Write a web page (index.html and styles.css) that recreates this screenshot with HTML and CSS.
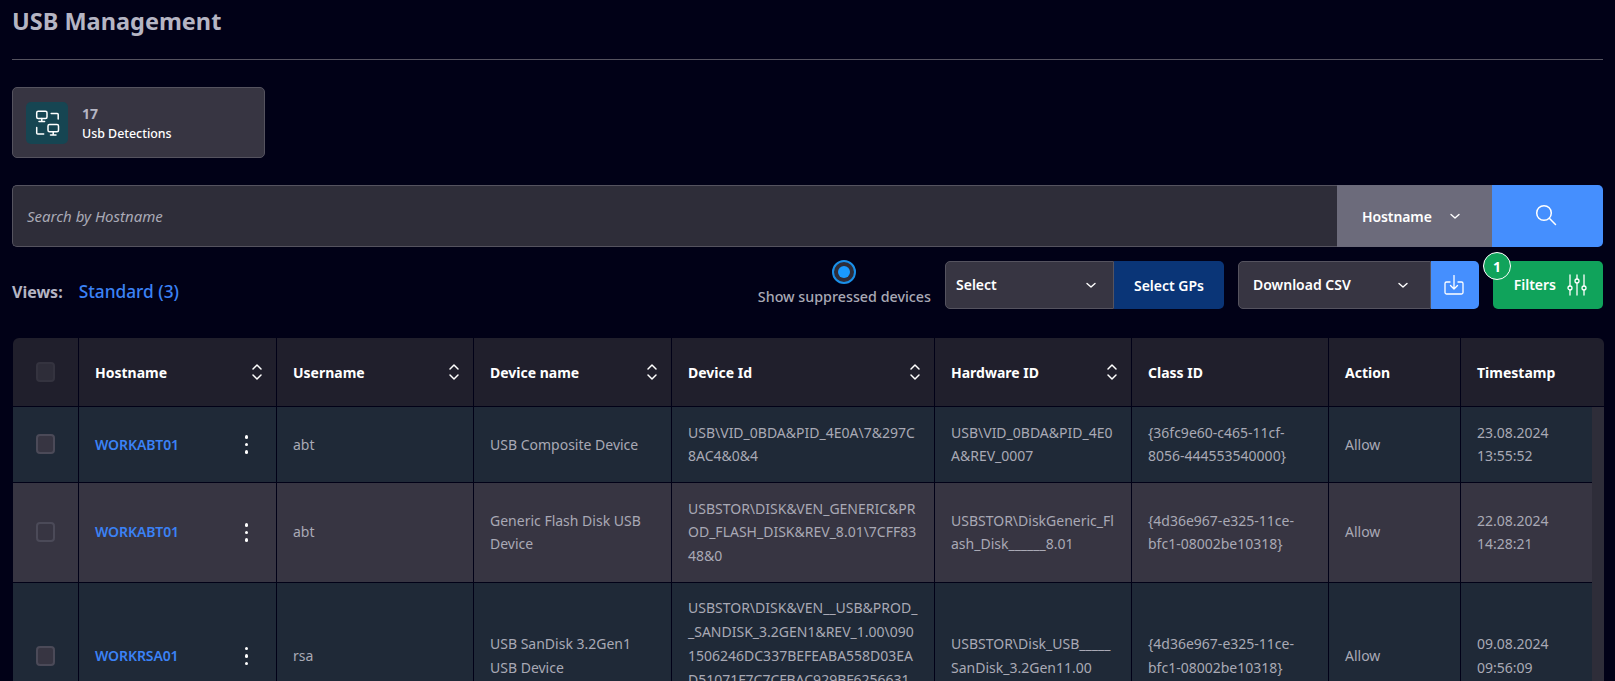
FILE: index.html
```html
<!DOCTYPE html>
<html lang="en">
<head>
<meta charset="utf-8">
<title>USB Management</title>
<link rel="stylesheet" href="styles.css">
</head>
<body>
<main class="page">
  <h1 class="title">USB Management</h1>
  <hr class="rule">
  <section class="card">
    <div class="tile">
      <svg width="26" height="26" viewBox="0 0 26 26" fill="none" stroke="#fff" stroke-width="1.500" stroke-linecap="round" stroke-linejoin="round">
        <rect x="2.700" y="1.200" width="10.300" height="7.300" rx="1.500"/><path d="M7.800 8.500V11M5 11.500h5.600"/>
        <path d="M17.200 3.500h6a1 1 0 0 1 1 1v4.500"/>
        <rect x="14" y="14.500" width="10.500" height="7.300" rx="1.500"/><path d="M19.200 21.800v2.700M16.500 25H22"/>
        <path d="M2.700 17.500V23a1 1 0 0 0 1 1h6"/>
      </svg>
    </div>
    <div class="card-text">
      <div class="card-num">17</div>
      <div class="card-label">Usb Detections</div>
    </div>
  </section>
  <section class="search">
    <div class="search-input">Search by Hostname</div>
    <div class="search-type">Hostname
      <svg width="12" height="12" viewBox="0 0 12 12" fill="none" stroke="#fff" stroke-width="1.400" stroke-linecap="round" stroke-linejoin="round"><path d="M2 4.500 6 8l4-3.500"/></svg>
    </div>
    <button class="search-btn" type="button">
      <svg width="24" height="24" viewBox="0 0 24 24" fill="none" stroke="#fff" stroke-width="1.500" stroke-linecap="round"><circle cx="10" cy="10" r="7.300"/><path d="m15.300 15.300 6.200 6.200"/></svg>
    </button>
  </section>
  <section class="controls">
    <div class="views"><span class="views-label">Views:</span><a class="views-link">Standard (3)</a></div>
    <div class="toggle">
      <span class="radio"><span class="radio-dot"></span></span>
      <span class="toggle-label">Show suppressed devices</span>
    </div>
    <div class="group">
      <div class="select select-gp"><span class="lift">Select</span>
        <svg width="12" height="12" viewBox="0 0 12 12" fill="none" stroke="#fff" stroke-width="1.400" stroke-linecap="round" stroke-linejoin="round"><path d="M2 4.500 6 8l4-3.500"/></svg>
      </div>
      <button class="btn-gp" type="button"><span class="lift">Select GPs</span></button>
    </div>
    <div class="group">
      <div class="select select-csv"><span class="lift">Download CSV</span>
        <svg width="12" height="12" viewBox="0 0 12 12" fill="none" stroke="#fff" stroke-width="1.400" stroke-linecap="round" stroke-linejoin="round"><path d="M2 4.500 6 8l4-3.500"/></svg>
      </div>
      <button class="btn-dl" type="button">
        <svg width="20" height="20" viewBox="0 0 20 20" fill="none" stroke="#fff" stroke-width="1.300" stroke-linecap="round" stroke-linejoin="round"><path d="M6 7H2.500A1.500 1.500 0 0 0 1 8.500v9A1.500 1.500 0 0 0 2.500 19h15a1.500 1.500 0 0 0 1.500-1.500v-9A1.500 1.500 0 0 0 17.500 7H14"/><path d="M10 .5V14M6.500 10.500 10 14l3.500-3.500"/></svg>
      </button>
    </div>
    <button class="btn-filter" type="button">
      <span class="badge">1</span>
      <span class="lift">Filters</span>
      <svg width="20" height="22" viewBox="0 0 20 22" fill="none" stroke="#fff" stroke-width="1.300" stroke-linecap="round"><path d="M3 1v11M3 16v5M10 1v4M10 9v12M17 1v11M17 16v5"/><circle cx="3" cy="14" r="2"/><circle cx="10" cy="7" r="2"/><circle cx="17" cy="14" r="2"/></svg>
    </button>
  </section>
  <section class="table">
    <div class="row head">
      <div class="cell"><span class="check check-dim"></span></div>
      <div class="cell sortable">Hostname<svg class="sort" width="12" height="18" viewBox="0 0 12 18" fill="none" stroke="#fff" stroke-width="1.500" stroke-linecap="round" stroke-linejoin="round"><path d="M2 6l4-4 4 4M2 12l4 4 4-4"/></svg></div>
      <div class="cell sortable">Username<svg class="sort" width="12" height="18" viewBox="0 0 12 18" fill="none" stroke="#fff" stroke-width="1.500" stroke-linecap="round" stroke-linejoin="round"><path d="M2 6l4-4 4 4M2 12l4 4 4-4"/></svg></div>
      <div class="cell sortable">Device name<svg class="sort" width="12" height="18" viewBox="0 0 12 18" fill="none" stroke="#fff" stroke-width="1.500" stroke-linecap="round" stroke-linejoin="round"><path d="M2 6l4-4 4 4M2 12l4 4 4-4"/></svg></div>
      <div class="cell sortable">Device Id<svg class="sort" width="12" height="18" viewBox="0 0 12 18" fill="none" stroke="#fff" stroke-width="1.500" stroke-linecap="round" stroke-linejoin="round"><path d="M2 6l4-4 4 4M2 12l4 4 4-4"/></svg></div>
      <div class="cell sortable">Hardware ID<svg class="sort" width="12" height="18" viewBox="0 0 12 18" fill="none" stroke="#fff" stroke-width="1.500" stroke-linecap="round" stroke-linejoin="round"><path d="M2 6l4-4 4 4M2 12l4 4 4-4"/></svg></div>
      <div class="cell">Class ID</div>
      <div class="cell">Action</div>
      <div class="cell">Timestamp</div>
    </div>
    <div class="tbody">
      <div class="rows">
        <div class="row odd">
          <div class="cell"><span class="check"></span></div>
          <div class="cell host"><a class="link">WORKABT01</a><span class="dots"><i></i><i></i><i></i></span></div>
          <div class="cell">abt</div>
          <div class="cell">USB Composite Device</div>
          <div class="cell brk">USB\VID_0BDA&amp;PID_4E0A\7&amp;297C8AC4&amp;0&amp;4</div>
          <div class="cell brk">USB\VID_0BDA&amp;PID_4E0A&amp;REV_0007</div>
          <div class="cell">{36fc9e60-c465-11cf-8056-444553540000}</div>
          <div class="cell">Allow</div>
          <div class="cell">23.08.2024 13:55:52</div>
        </div>
        <div class="row even">
          <div class="cell"><span class="check check-clear"></span></div>
          <div class="cell host"><a class="link">WORKABT01</a><span class="dots"><i></i><i></i><i></i></span></div>
          <div class="cell">abt</div>
          <div class="cell">Generic Flash Disk USB Device</div>
          <div class="cell brk">USBSTOR\DISK&amp;VEN_GENERIC&amp;PROD_FLASH_DISK&amp;REV_8.01\7CFF8348&amp;0</div>
          <div class="cell brk">USBSTOR\DiskGeneric_Flash_Disk______8.01</div>
          <div class="cell">{4d36e967-e325-11ce-bfc1-08002be10318}</div>
          <div class="cell">Allow</div>
          <div class="cell">22.08.2024 14:28:21</div>
        </div>
        <div class="row odd">
          <div class="cell"><span class="check"></span></div>
          <div class="cell host"><a class="link">WORKRSA01</a><span class="dots"><i></i><i></i><i></i></span></div>
          <div class="cell">rsa</div>
          <div class="cell">USB SanDisk 3.2Gen1 USB Device</div>
          <div class="cell brk">USBSTOR\DISK&amp;VEN__USB&amp;PROD__SANDISK_3.2GEN1&amp;REV_1.00\0901506246DC337BEFEABA558D03EAD51071F7C7CFBAC929BF6256631&amp;0</div>
          <div class="cell brk">USBSTOR\Disk_USB_____SanDisk_3.2Gen11.00</div>
          <div class="cell">{4d36e967-e325-11ce-bfc1-08002be10318}</div>
          <div class="cell">Allow</div>
          <div class="cell">09.08.2024 09:56:09</div>
        </div>
      </div>
      <div class="scrollbar"></div>
    </div>
  </section>
</main>
</body>
</html>
```
FILE: styles.css
```css
* { box-sizing: border-box; }
html, body { margin: 0; height: 681px; overflow: hidden; }
body { background: #010117; font-family: "Noto Sans", sans-serif; color: #a9a9b5; }
.page { padding: 0 12px; height: 681px; overflow: hidden; }
.title { margin: 0; height: 59px; padding-top: 3px; font-size: 23.500px; line-height: 36px; font-weight: 700; color: #b5b5c3; }
.rule { margin: 0 0 27px; border: 0; height: 1px; background: #55535f; }

.card { width: 253px; height: 71px; display: flex; align-items: center; gap: 14px; padding: 0 13px; background: #373542; border: 1px solid #55535f; border-radius: 5px; }
.tile { width: 42px; height: 42px; flex: none; display: flex; align-items: center; justify-content: center; background: #164552; border-radius: 5px; }
.card-num { margin-top: 1px; font-size: 14px; line-height: 20px; font-weight: 700; color: #b5b5c3; }
.card-label { margin-top: 1px; font-size: 12.400px; line-height: 18px; font-weight: 500; color: #fff; }

.search { margin-top: 27px; height: 62px; display: flex; }
.search-input { flex: 1; display: flex; align-items: center; padding-left: 14px; font-size: 15px; font-style: italic; color: #a9a9b5; background: #2e2d39; border: 1px solid #55535f; border-right: 0; border-radius: 5px 0 0 5px; }
.search-type { width: 155px; display: flex; align-items: center; justify-content: space-between; padding: 0 31px 0 25px; font-size: 14px; font-weight: 600; letter-spacing: -0.1px; color: #fff; background: #6c6b7b; }
.search-btn { width: 111px; display: flex; align-items: center; justify-content: center; padding: 0 3px 3px 0; border: 0; background: #458ffe; border-radius: 0 5px 5px 0; }

.controls { margin-top: 14px; height: 48px; display: flex; gap: 14px; }
.views { margin-top: 19px; margin-right: auto; display: flex; gap: 16px; font-size: 16px; line-height: 24px; }
.views-label { font-weight: 700; color: #b5b5c3; }
.views-link { font-size: 17.300px; font-weight: 500; color: #3b82f6; }
.toggle { display: flex; flex-direction: column; align-items: center; margin-top: -1px; }
.radio { width: 24px; height: 24px; display: flex; align-items: center; justify-content: center; border: 2px solid #1a8fe8; border-radius: 50%; background: #2e2d39; }
.radio-dot { width: 12px; height: 12px; border-radius: 50%; background: #1a9bff; }
.toggle-label { margin-top: 2px; font-size: 14.300px; line-height: 22px; font-weight: 500; color: #a9a9b5; }
.group { display: flex; }
.lift { margin-bottom: 2px; }
.select { display: flex; align-items: center; justify-content: space-between; font-size: 14px; font-weight: 600; color: #fff; background: #373542; border: 1px solid #55535f; border-radius: 5px 0 0 5px; }
.select-gp { width: 169px; padding: 0 16px 0 10px; }
.select-csv { width: 193px; padding: 0 21px 0 14px; }
.btn-gp { width: 110px; padding: 0; border: 0; font: 600 14px "Noto Sans", sans-serif; color: #fff; background: #0a3577; border-radius: 0 5px 5px 0; }
.btn-dl { width: 48px; display: flex; align-items: center; justify-content: center; padding: 0 2px 0 0; border: 0; background: #458ffe; border-radius: 0 5px 5px 0; }
.btn-filter { position: relative; width: 110px; display: flex; align-items: center; justify-content: flex-end; gap: 11px; padding: 0 16px 0 0; border: 0; font: 600 14px "Noto Sans", sans-serif; color: #fff; background: #10a35b; border-radius: 5px; }
.badge { position: absolute; left: -10px; top: -9px; width: 28px; height: 28px; display: flex; align-items: center; justify-content: center; font-size: 14px; font-weight: 700; color: #fff; background: #10a35b; border: 1px solid #fff; border-radius: 50%; }

.table { margin: 29px -1px 0 1px; }
.row { display: grid; grid-template-columns: 66px 198px 197px 198px 263px 197px 197px 132px 141px; }
.head { background: #201f2c; border-radius: 6px 6px 0 0; border-bottom: 1px solid #010117; height: 69px; font-size: 14px; font-weight: 700; color: #fff; overflow: hidden; }
.tbody { display: flex; background: #2e2d39; }
.rows { width: 1579px; }
.rows .row { grid-template-columns: 66px 198px 197px 198px 263px 197px 197px 132px 131px; border-bottom: 1px solid #010117; font-size: 14px; line-height: 23.800px; }
.scrollbar { width: 10px; flex: none; }
.odd { background: #1f2937; }
.even { background: #373542; }
.cell { display: flex; align-items: center; padding: 13.700px 16px; border-right: 1px solid #010117; min-width: 0; }
.row .cell:last-child { border-right: 0; }
.cell:first-child { justify-content: center; padding: 0; }
.brk { word-break: break-all; }
.sortable { justify-content: space-between; padding-right: 13px; }
.check { width: 19px; height: 20px; background: #373542; border: 2px solid #4b4a58; border-radius: 4px; }
.check-dim { background: #2e2d39; border-color: #34333f; }
.check-clear { background: transparent; }
.host { justify-content: space-between; padding-right: 28px; }
.link { font-size: 14px; font-weight: 600; letter-spacing: -0.1px; color: #3b82f6; }
.dots { display: flex; flex-direction: column; gap: 4px; }
.dots i { width: 3.500px; height: 3.500px; border-radius: 50%; background: #fff; }
```
